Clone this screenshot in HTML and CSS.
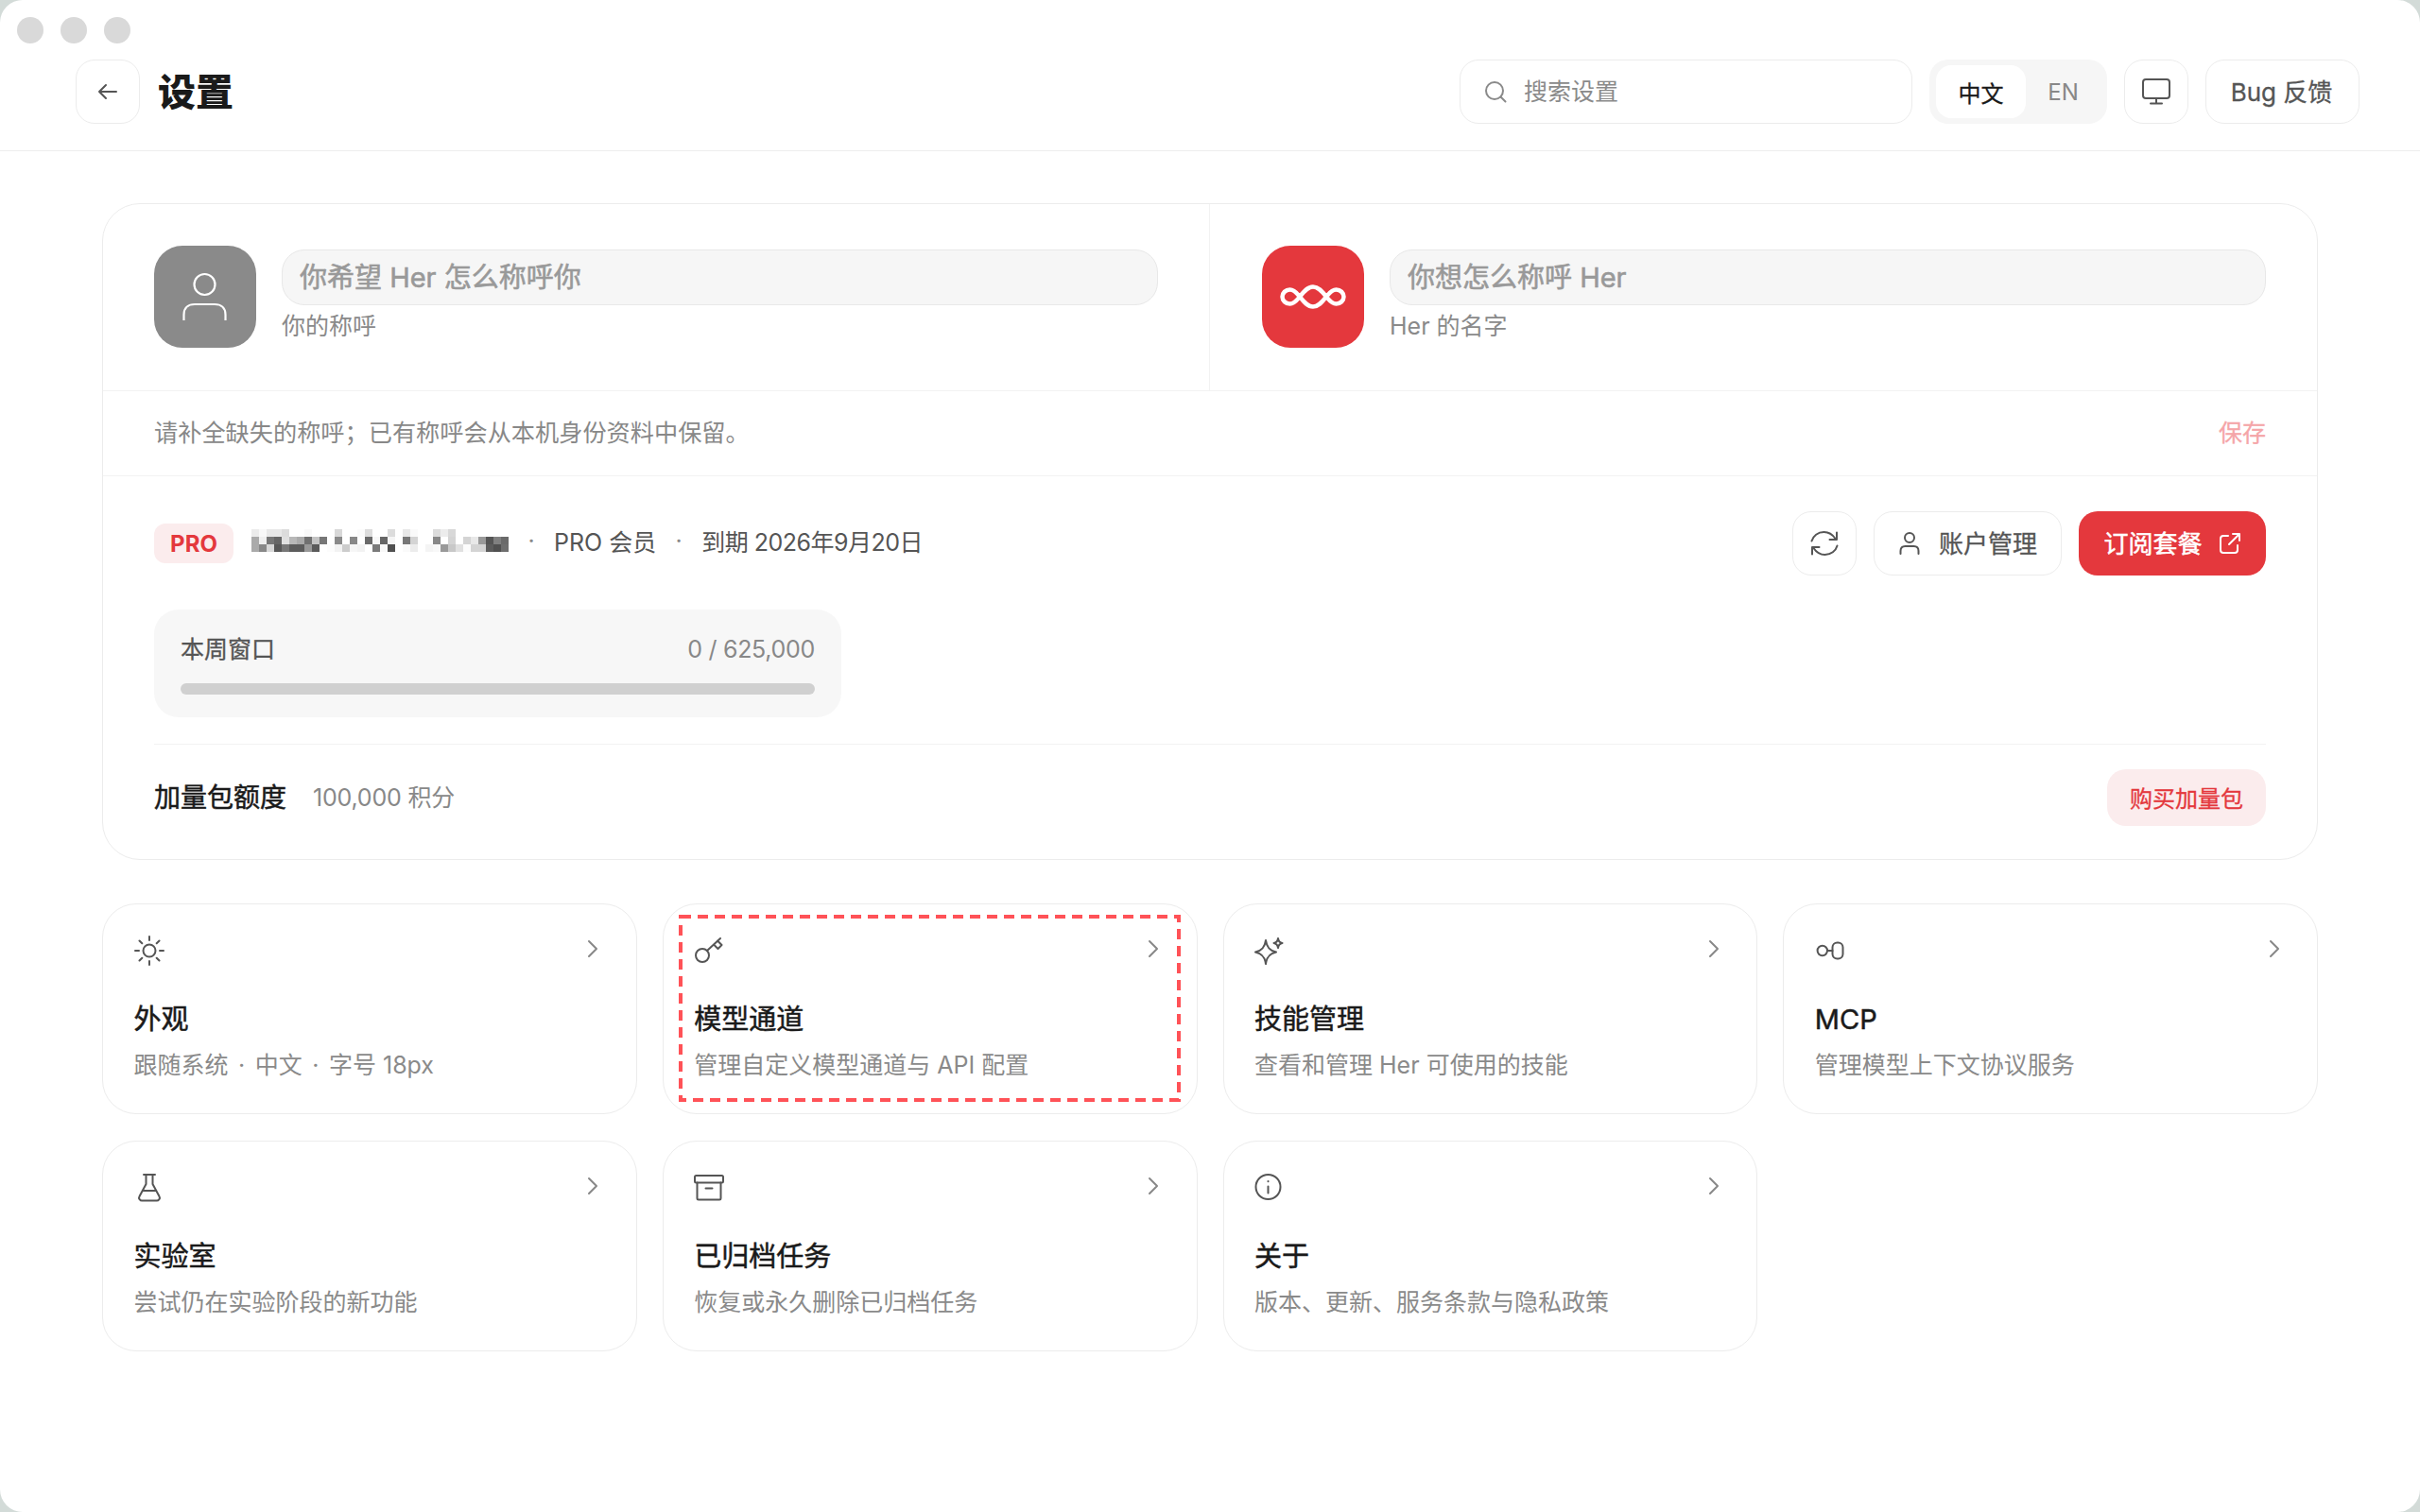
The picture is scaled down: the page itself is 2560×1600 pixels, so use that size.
FILE: index.html
```html
<!DOCTYPE html>
<html lang="zh-CN">
<head>
    <meta charset="UTF-8">
    <meta name="viewport" content="width=device-width, initial-scale=1.0">
    <title>设置</title>
    <link rel="stylesheet" href="styles.css">
</head>
<body>
    <div class="window">
        <div class="traffic">
            <span class="light"></span>
            <span class="light"></span>
            <span class="light"></span>
        </div>
        <header class="header">
            <button class="btn btn-icon back">
                <svg class="icon" width="24" height="24" viewBox="0 0 24 24"><path d="M21 12H3M10 5l-7 7 7 7"/></svg>
            </button>
            <h1 class="page-title">设置</h1>
            <div class="header-tools">
                <label class="search">
                    <svg class="icon search-icon" width="26" height="26" viewBox="0 0 26 26"><circle cx="12" cy="12" r="9"/><path d="M18.5 18.5l5 5"/></svg>
                    <input class="search-input" placeholder="搜索设置">
                </label>
                <div class="lang">
                    <span class="lang-item active">中文</span>
                    <span class="lang-item">EN</span>
                </div>
                <button class="btn btn-icon">
                    <svg class="icon" width="32" height="30" viewBox="0 0 32 30"><rect x="2" y="2" width="28" height="20" rx="3"/><path d="M16 22v5M10 27.500h12"/></svg>
                </button>
                <button class="btn btn-bug"><span class="btn-label">Bug 反馈</span></button>
            </div>
        </header>

        <main class="main">
            <section class="panel">
                <div class="names">
                    <div class="name-cell">
                        <div class="avatar avatar-user">
                            <svg width="108" height="108" viewBox="0 0 108 108" fill="none" stroke="#fff" stroke-width="2.200"><circle cx="53.500" cy="41" r="11"/><path d="M31.500 79v-6c0-7 4.500-11 11.500-11h21c7 0 11.500 4 11.500 11v6"/></svg>
                        </div>
                        <div class="name-field">
                            <input class="name-input" placeholder="你希望 Her 怎么称呼你">
                            <div class="name-label">你的称呼</div>
                        </div>
                    </div>
                    <div class="name-cell">
                        <div class="avatar avatar-her">
                            <svg width="74" height="30" viewBox="-2 -2 74 30" fill="none" stroke="#fff" stroke-width="4.500"><path d="M2.500 13C2.500 9 6 5.500 10.500 5.500c5 0 7.500 4 10.500 7.500 4 5 8 10.500 14 10.500s10-5.500 14-10.500c3-3.500 5.500-7.500 10.500-7.500 4.500 0 8 3.500 8 7.500s-3.500 7.500-8 7.500c-5 0-7.500-4-10.500-7.500-4-5-8-10.500-14-10.500S25 8 21 13c-3 3.500-5.500 7.500-10.500 7.500-4.500 0-8-3.500-8-7.500z"/></svg>
                        </div>
                        <div class="name-field">
                            <input class="name-input" placeholder="你想怎么称呼 Her">
                            <div class="name-label">Her 的名字</div>
                        </div>
                    </div>
                </div>
                <div class="name-note">
                    <span class="note-text">请补全缺失的称呼；已有称呼会从本机身份资料中保留。</span>
                    <span class="save">保存</span>
                </div>
                <div class="account">
                    <div class="account-row">
                        <div class="account-info">
                            <span class="badge">PRO</span>
                            <!-- mosaic over the email address -->
                            <svg class="mosaic" width="272" height="24" viewBox="0 0 34 3" shape-rendering="crispEdges">
                                <rect x="0" y="0" width="1" height="1" fill="#ebebeb"/><rect x="1" y="0" width="1" height="1" fill="#f8f8f8"/><rect x="2" y="0" width="2" height="1" fill="#e8e8e8"/><rect x="4" y="0" width="1" height="1" fill="#dcdcdc"/><rect x="7" y="0" width="1" height="1" fill="#f9f9f9"/><rect x="11" y="0" width="1" height="1" fill="#d8d8d8"/><rect x="14" y="0" width="1" height="1" fill="#fbfbfb"/><rect x="15" y="0" width="1" height="1" fill="#dcdcdc"/><rect x="18" y="0" width="1" height="1" fill="#dcdcdc"/><rect x="20" y="0" width="1" height="1" fill="#e8e8e8"/><rect x="21" y="0" width="1" height="1" fill="#fafafa"/><rect x="24" y="0" width="1" height="1" fill="#dcdcdc"/><rect x="25" y="0" width="1" height="1" fill="#ececec"/><rect x="26" y="0" width="1" height="1" fill="#d8d8d8"/>
                                <rect x="0" y="1" width="1" height="1" fill="#aaa"/><rect x="1" y="1" width="1" height="1" fill="#efefef"/><rect x="2" y="1" width="1" height="1" fill="#777"/><rect x="3" y="1" width="1" height="1" fill="#666"/><rect x="4" y="1" width="1" height="1" fill="#e0e0e0"/><rect x="5" y="1" width="1" height="1" fill="#b8b8b8"/><rect x="6" y="1" width="1" height="1" fill="#aaa"/><rect x="7" y="1" width="1" height="1" fill="#707070"/><rect x="8" y="1" width="1" height="1" fill="#c4c4c4"/><rect x="9" y="1" width="1" height="1" fill="#777"/><rect x="11" y="1" width="1" height="1" fill="#8a8a8a"/><rect x="13" y="1" width="1" height="1" fill="#888"/><rect x="15" y="1" width="1" height="1" fill="#6a6a6a"/><rect x="16" y="1" width="1" height="1" fill="#f8f8f8"/><rect x="17" y="1" width="1" height="1" fill="#666"/><rect x="18" y="1" width="1" height="1" fill="#f5f5f5"/><rect x="20" y="1" width="1" height="1" fill="#777"/><rect x="21" y="1" width="1" height="1" fill="#d4d4d4"/><rect x="24" y="1" width="1" height="1" fill="#888"/><rect x="26" y="1" width="1" height="1" fill="#d4d4d4"/><rect x="28" y="1" width="1" height="1" fill="#d4d4d4"/><rect x="29" y="1" width="1" height="1" fill="#e8e8e8"/><rect x="30" y="1" width="1" height="1" fill="#999"/><rect x="31" y="1" width="1" height="1" fill="#555"/><rect x="32" y="1" width="1" height="1" fill="#808080"/><rect x="33" y="1" width="1" height="1" fill="#6a6a6a"/>
                                <rect x="0" y="2" width="1" height="1" fill="#aaa"/><rect x="1" y="2" width="1" height="1" fill="#888"/><rect x="2" y="2" width="1" height="1" fill="#d8d8d8"/><rect x="3" y="2" width="1" height="1" fill="#585858"/><rect x="4" y="2" width="1" height="1" fill="#777"/><rect x="5" y="2" width="2" height="1" fill="#5c5c5c"/><rect x="7" y="2" width="1" height="1" fill="#999"/><rect x="8" y="2" width="1" height="1" fill="#5a5a5a"/><rect x="10" y="2" width="1" height="1" fill="#fcfcfc"/><rect x="11" y="2" width="1" height="1" fill="#f2f2f2"/><rect x="12" y="2" width="1" height="1" fill="#ccc"/><rect x="13" y="2" width="1" height="1" fill="#f6f6f6"/><rect x="14" y="2" width="1" height="1" fill="#f2f2f2"/><rect x="16" y="2" width="1" height="1" fill="#7a7a7a"/><rect x="17" y="2" width="1" height="1" fill="#f8f8f8"/><rect x="18" y="2" width="1" height="1" fill="#505050"/><rect x="20" y="2" width="1" height="1" fill="#fafafa"/><rect x="21" y="2" width="1" height="1" fill="#ececec"/><rect x="23" y="2" width="1" height="1" fill="#f4f4f4"/><rect x="24" y="2" width="1" height="1" fill="#f8f8f8"/><rect x="25" y="2" width="1" height="1" fill="#999"/><rect x="26" y="2" width="1" height="1" fill="#c8c8c8"/><rect x="27" y="2" width="1" height="1" fill="#e0e0e0"/><rect x="28" y="2" width="1" height="1" fill="#fcfcfc"/><rect x="29" y="2" width="2" height="1" fill="#d4d4d4"/><rect x="31" y="2" width="1" height="1" fill="#5c5c5c"/><rect x="32" y="2" width="1" height="1" fill="#505050"/><rect x="33" y="2" width="1" height="1" fill="#6e6e6e"/>
                            </svg>
                            <span class="dot">·</span>
                            <span class="meta">PRO 会员</span>
                            <span class="dot">·</span>
                            <span class="meta meta-date">到期 2026年9月20日</span>
                        </div>
                        <div class="account-actions">
                            <button class="btn btn-icon">
                                <svg class="icon" width="32" height="28" viewBox="0 0 32 28"><path d="M2.500 11.500C4 6 9 2 15.500 2c5 0 9 2.500 12 7"/><path d="M29 2.500V10h-7.500"/><path d="M29.500 16.500C28 22 23 26 16.500 26c-5 0-9-2.500-12-7"/><path d="M3 25.500V18h7.500"/></svg>
                            </button>
                            <button class="btn btn-account">
                                <svg class="icon" width="22" height="26" viewBox="0 0 22 26"><circle cx="11" cy="7" r="5"/><path d="M1.500 24v-3c0-3 2-5 5-5h9c3 0 5 2 5 5v3"/></svg>
                                <span class="btn-label">账户管理</span>
                            </button>
                            <button class="btn btn-primary">
                                <span class="btn-label">订阅套餐</span>
                                <svg class="icon icon-white" width="24" height="24" viewBox="0 0 24 24"><path d="M10 4H5a3 3 0 0 0-3 3v12a3 3 0 0 0 3 3h12a3 3 0 0 0 3-3v-5"/><path d="M15 2h7v7M22 2L11 13"/></svg>
                            </button>
                        </div>
                    </div>
                    <div class="quota">
                        <div class="quota-head">
                            <span class="quota-name">本周窗口</span>
                            <span class="quota-value">0 / 625,000</span>
                        </div>
                        <div class="quota-bar"></div>
                    </div>
                    <div class="addon">
                        <div class="addon-info">
                            <span class="addon-name">加量包额度</span>
                            <span class="addon-value">100,000 积分</span>
                        </div>
                        <button class="btn-soft">购买加量包</button>
                    </div>
                </div>
            </section>

            <section class="cards">
                <div class="card">
                    <div class="card-head">
                        <svg class="icon card-icon" width="32" height="32" viewBox="0 0 32 32"><circle cx="16" cy="16" r="6.500"/><path d="M16 1v4M16 27v4M1 16h4M27 16h4M5.500 5.500l2.800 2.800M23.700 23.700l2.800 2.800M5.500 26.500l2.800-2.800M23.700 8.300l2.800-2.800"/></svg>
                        <svg class="chevron" width="32" height="32" viewBox="0 0 24 24"><path d="M9 6l6 6-6 6"/></svg>
                    </div>
                    <div class="card-title">外观</div>
                    <div class="card-desc">跟随系统<span class="sep">·</span>中文<span class="sep">·</span>字号 18px</div>
                </div>
                <div class="card">
                    <svg class="highlight" width="531" height="198"><rect x="2" y="2" width="527" height="194" fill="none" stroke="#ff5257" stroke-width="4" stroke-dasharray="11 7"/></svg>
                    <div class="card-head">
                        <svg class="icon card-icon" width="32" height="32" viewBox="0 0 32 32"><circle cx="9" cy="21" r="7"/><path d="M14 16L28 3M21 9.500l4.500 4.500 4-4-4.500-4.500"/></svg>
                        <svg class="chevron" width="32" height="32" viewBox="0 0 24 24"><path d="M9 6l6 6-6 6"/></svg>
                    </div>
                    <div class="card-title">模型通道</div>
                    <div class="card-desc">管理自定义模型通道与 API 配置</div>
                </div>
                <div class="card">
                    <div class="card-head">
                        <svg class="icon card-icon" width="32" height="32" viewBox="0 0 32 32"><path d="M12 5c1 7.500 4 11 11 12.500C16 19 13 22.500 12 30 11 22.500 8 19 1 17.500 8 16 11 12.500 12 5z"/><path d="M25 3c.5 3 1.500 4.500 4.500 5-3 .5-4 2-4.500 5-.5-3-1.500-4.500-4.500-5 3-.5 4-2 4.500-5z"/></svg>
                        <svg class="chevron" width="32" height="32" viewBox="0 0 24 24"><path d="M9 6l6 6-6 6"/></svg>
                    </div>
                    <div class="card-title">技能管理</div>
                    <div class="card-desc">查看和管理 Her 可使用的技能</div>
                </div>
                <div class="card">
                    <div class="card-head">
                        <svg class="icon card-icon" width="32" height="32" viewBox="0 0 32 32"><circle cx="7.800" cy="16" r="5.200"/><rect x="18.500" y="7.500" width="11" height="17" rx="5"/><path d="M13 16h5.500"/></svg>
                        <svg class="chevron" width="32" height="32" viewBox="0 0 24 24"><path d="M9 6l6 6-6 6"/></svg>
                    </div>
                    <div class="card-title">MCP</div>
                    <div class="card-desc">管理模型上下文协议服务</div>
                </div>
                <div class="card">
                    <div class="card-head">
                        <svg class="icon card-icon" width="32" height="32" viewBox="0 0 32 32"><path d="M10 2h12M12.500 2v10L5.500 25a3 3 0 0 0 2.600 4.500h15.800a3 3 0 0 0 2.600-4.500L19.500 12V2M9 19h14"/></svg>
                        <svg class="chevron" width="32" height="32" viewBox="0 0 24 24"><path d="M9 6l6 6-6 6"/></svg>
                    </div>
                    <div class="card-title">实验室</div>
                    <div class="card-desc">尝试仍在实验阶段的新功能</div>
                </div>
                <div class="card">
                    <div class="card-head">
                        <svg class="icon card-icon" width="32" height="32" viewBox="0 0 32 32"><rect x="1" y="3" width="30" height="7.500" rx="1.500"/><path d="M3.500 10.500V27a1.500 1.500 0 0 0 1.500 1.500h22a1.500 1.500 0 0 0 1.500-1.500V10.500M12.500 16.500h7"/></svg>
                        <svg class="chevron" width="32" height="32" viewBox="0 0 24 24"><path d="M9 6l6 6-6 6"/></svg>
                    </div>
                    <div class="card-title">已归档任务</div>
                    <div class="card-desc">恢复或永久删除已归档任务</div>
                </div>
                <div class="card">
                    <div class="card-head">
                        <svg class="icon card-icon" width="32" height="32" viewBox="0 0 32 32"><circle cx="14.500" cy="15" r="13"/><path d="M14.500 14.500v7M14.500 9v.2"/></svg>
                        <svg class="chevron" width="32" height="32" viewBox="0 0 24 24"><path d="M9 6l6 6-6 6"/></svg>
                    </div>
                    <div class="card-title">关于</div>
                    <div class="card-desc">版本、更新、服务条款与隐私政策</div>
                </div>
            </section>
        </main>
    </div>
</body>
</html>
```
FILE: styles.css
```css
* {
    box-sizing: border-box;
}
body {
    margin: 0;
    background-color: #d3dbd8;
    font-family: Inter, "Noto Sans CJK SC", sans-serif;
    font-size: 25px;
    color: #555;
}
button,
input {
    font-family: inherit;
}
.window {
    height: 1600px;
    background-color: #fff;
    border-radius: 24px;
    overflow: hidden;
}
.traffic {
    display: flex;
    gap: 18px;
    padding: 18px 0 0 18px;
}
.light {
    width: 28px;
    height: 28px;
    border-radius: 50%;
    background-color: #d9d9d9;
}
.icon {
    fill: none;
    stroke: #555;
    stroke-width: 2;
    stroke-linecap: round;
    stroke-linejoin: round;
    flex-shrink: 0;
}
.icon-white {
    stroke: #fff;
}

/* header */
.header {
    display: flex;
    align-items: center;
    height: 114px;
    padding: 17px 64px 28px 80px;
    border-bottom: 1px solid #eee;
}
.page-title {
    margin: 0 0 0 19px;
    padding-bottom: 4px;
    font-size: 40px;
    font-weight: 900;
    color: #1a1a1a;
}
.header-tools {
    display: flex;
    align-items: center;
    gap: 18px;
    margin-left: auto;
}
.btn {
    display: flex;
    align-items: center;
    justify-content: center;
    height: 68px;
    padding: 0;
    background-color: #fff;
    border: 1.5px solid #ececec;
    border-radius: 20px;
    font-size: 26px;
    font-weight: 400;
    -webkit-text-stroke: 0.3px;
    color: #555;
}
.btn-icon {
    width: 68px;
}
.btn-bug {
    width: 163px;
    padding-right: 2px;
}
.btn-label {
    padding-bottom: 4px;
}
.search {
    display: flex;
    align-items: center;
    gap: 17px;
    width: 479px;
    height: 68px;
    padding: 0 24px;
    border: 1.5px solid #ececec;
    border-radius: 20px;
}
.search-icon {
    stroke: #8a8a8a;
}
.search-input {
    flex: 1;
    min-width: 0;
    border: 0;
    outline: 0;
    padding: 0;
    font-size: 25px;
    background: transparent;
}
.search-input::placeholder {
    color: #8a8a8a;
}
.lang {
    display: flex;
    align-items: center;
    width: 188px;
    height: 68px;
    padding: 6px 7px;
    background-color: #f6f6f6;
    border-radius: 20px;
    font-size: 24px;
}
.lang-item {
    display: flex;
    align-items: center;
    justify-content: center;
    flex: 1;
    height: 56px;
    color: #888;
}
.lang-item.active {
    flex: 0 0 95px;
    background-color: #fff;
    border-radius: 16px;
    -webkit-text-stroke: 0.3px;
    color: #1a1a1a;
}

/* top panel */
.main {
    padding: 55px 108px 0;
}
.panel {
    border: 1.5px solid #ececec;
    border-radius: 40px;
}
.names {
    display: grid;
    grid-template-columns: 1fr 1fr;
    border-bottom: 1.5px solid #f2f2f2;
}
.name-cell {
    display: flex;
    gap: 27px;
    padding: 44px 54px 45px;
}
.name-cell:first-child {
    border-right: 1.5px solid #f2f2f2;
}
.name-cell:last-child {
    padding-left: 55px;
}
.avatar {
    display: flex;
    align-items: center;
    justify-content: center;
    flex-shrink: 0;
    width: 108px;
    height: 108px;
    border-radius: 30px;
}
.avatar-user {
    background-color: #8a8a8a;
}
.avatar-her {
    background-color: #e4383d;
}
.name-field {
    flex: 1;
    padding-top: 4px;
}
.name-input {
    display: block;
    width: 100%;
    height: 59px;
    padding: 0 18px 0 18px;
    background-color: #f6f6f6;
    border: 1.5px solid #e8e8e8;
    border-radius: 24px;
    outline: 0;
    font-size: 29px;
}
.name-input::placeholder {
    -webkit-text-stroke: 0.6px #999;
    color: #999;
}
.name-label {
    margin-top: 5px;
    line-height: 34px;
    color: #8a8a8a;
}
.name-note {
    display: flex;
    align-items: center;
    justify-content: space-between;
    height: 90px;
    padding: 0 54px;
    border-bottom: 1.5px solid #f2f2f2;
    color: #888;
}
.note-text {
    padding-bottom: 6px;
    font-size: 25.2px;
}
.save {
    padding-bottom: 6px;
    -webkit-text-stroke: 0.3px;
    color: #f5a5a8;
}

/* account */
.account {
    padding: 37px 54px 35px;
}
.account-row {
    display: flex;
    align-items: center;
    justify-content: space-between;
}
.account-info {
    display: flex;
    align-items: center;
    font-size: 25px;
}
.badge {
    display: flex;
    align-items: center;
    justify-content: center;
    width: 84px;
    height: 42px;
    margin-right: 19px;
    background-color: #fbeced;
    border-radius: 12px;
    font-size: 24px;
    font-weight: 700;
    color: #e4383d;
}
.mosaic {
    margin-top: -6px;
}
.meta {
    padding-bottom: 6px;
}
.meta-date {
    letter-spacing: -0.5px;
}
.dot {
    width: 48px;
    padding-bottom: 6px;
    text-align: center;
    color: #888;
}
.account-actions {
    display: flex;
    gap: 18px;
}
.btn-account {
    gap: 20px;
    width: 199px;
    padding: 0 0 0 1px;
}
.btn-primary {
    gap: 17px;
    width: 198px;
    background-color: #e4383d;
    border: 0;
    -webkit-text-stroke: 0.5px;
    color: #fff;
}
.quota {
    width: 727px;
    height: 114px;
    margin-top: 36px;
    padding: 23px 28px 0;
    background-color: #f7f7f7;
    border-radius: 26px;
}
.quota-head {
    display: flex;
    justify-content: space-between;
    line-height: 38px;
}
.quota-name {
    -webkit-text-stroke: 0.3px;
}
.quota-value {
    letter-spacing: -0.3px;
    color: #888;
}
.quota-bar {
    height: 12px;
    margin-top: 17px;
    background-color: #d0d0d0;
    border-radius: 6px;
}
.addon {
    display: flex;
    align-items: center;
    justify-content: space-between;
    margin-top: 28px;
    padding-top: 26px;
    border-top: 1.5px solid #f2f2f2;
}
.addon-info {
    display: flex;
    align-items: center;
    gap: 28px;
    padding-bottom: 4px;
}
.addon-name {
    font-size: 28px;
    -webkit-text-stroke: 0.5px;
    color: #1a1a1a;
}
.addon-value {
    letter-spacing: -0.2px;
    color: #888;
}
.btn-soft {
    width: 168px;
    height: 60px;
    padding: 0 0 2px;
    background-color: #fbeced;
    border: 0;
    border-radius: 20px;
    font-size: 24px;
    -webkit-text-stroke: 0.3px;
    color: #e4383d;
}

/* entry cards */
.cards {
    display: grid;
    grid-template-columns: repeat(4, 1fr);
    gap: 28px 27px;
    margin-top: 46px;
}
.card {
    position: relative;
    height: 223px;
    padding: 32px 29.5px 0 32.5px;
    border: 1.5px solid #ececec;
    border-radius: 36px;
}
.card-head {
    display: flex;
    justify-content: space-between;
    height: 34px;
}
.card-icon {
    margin-top: 1px;
}
.chevron {
    margin-top: -1px;
    fill: none;
    stroke: #888;
    stroke-width: 1.500;
    stroke-linecap: round;
    stroke-linejoin: round;
}
.card-title {
    margin-top: 36px;
    font-size: 29px;
    line-height: 40px;
    -webkit-text-stroke: 0.5px;
    color: #1a1a1a;
}
.card-desc {
    margin-top: 10px;
    line-height: 36px;
    color: #8a8a8a;
}
.sep {
    margin: 0 10.5px;
}
.highlight {
    position: absolute;
    top: 11px;
    left: 16px;
}
```
